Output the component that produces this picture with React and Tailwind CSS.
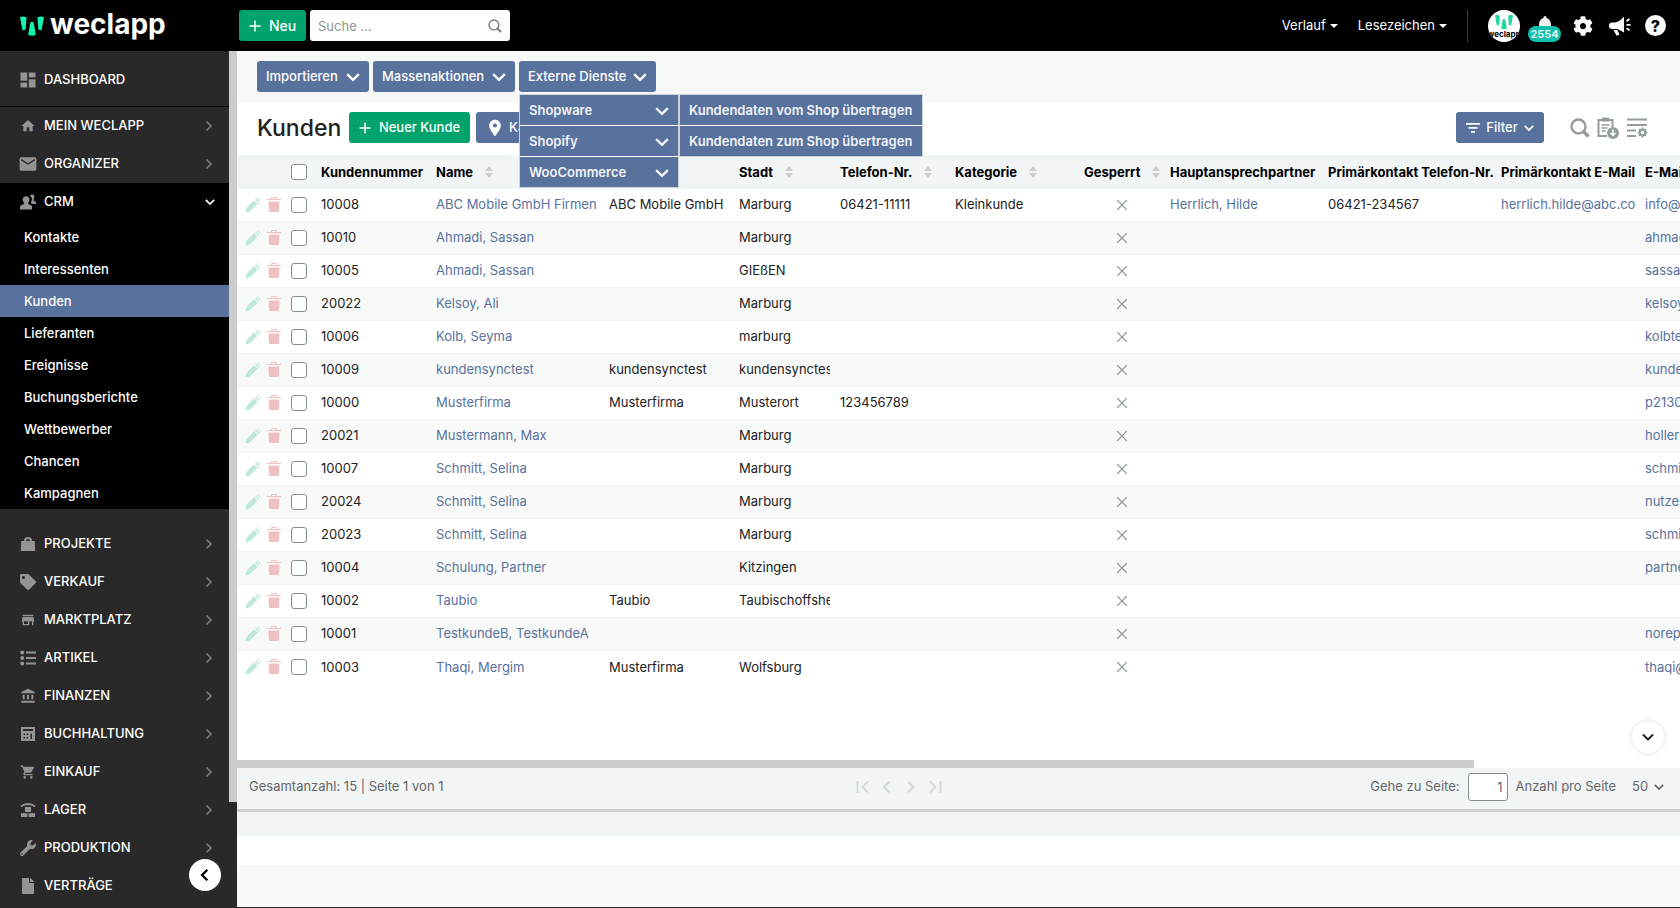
import React, { useState } from 'react';
import {
  MdDashboard,
  MdHome,
  MdEmail,
  MdStore,
  MdAccountBalance,
  MdShoppingCart,
  MdLocationOn,
} from 'react-icons/md';
import { FaTag, FaWrench, FaFile, FaCog } from 'react-icons/fa';

const PeopleIcon = ({ className }) => (
  <svg viewBox="0 0 16 15" fill="currentColor" className={className}>
    <path d="M10 1.5C10.500.3 11.300 0 12.200 0c1.600 0 2.400 1.200 2.200 2.800-.1 1-.6 1.700-.9 2.100v1.300l2.500 1.200v2h-4L10.800 8c.8-1 1.100-2.200 1.100-3.500 0-1.400-.8-2.500-1.900-3z" />
    <path d="M6.300 1.700c2.100 0 3.300 1.400 3.200 3.400-.1 1.400-.6 2.300-1.200 3v1.500l3 1.300c.6.300.8.8.8 1.500V15H0v-2.600c0-.7.300-1.200.9-1.500l3-1.300V8.100c-.6-.7-1.100-1.600-1.200-3-.1-2 1.400-3.400 3.600-3.400z" />
  </svg>
);

const BagIcon = ({ className }) => (
  <svg viewBox="0 0 16 16" fill="currentColor" className={className}>
    <path d="M1.200 5H4a4 4 0 0 1 8 0h2.800l.4 10H.8zM6 5h4a2 2 0 0 0-4 0z" fillRule="evenodd" />
  </svg>
);

const ListIcon = ({ className }) => (
  <svg viewBox="0 0 16 16" fill="currentColor" className={className}>
    <circle cx="2.200" cy="2.500" r="2" />
    <circle cx="2.200" cy="8" r="2" />
    <circle cx="2.200" cy="13.500" r="2" />
    <path d="M6 1.500h10v2H6zM6 7h10v2H6zM6 12.500h10v2H6z" />
  </svg>
);

const CalculatorIcon = ({ className }) => (
  <svg viewBox="0 0 16 16" fill="currentColor" className={className}>
    <path
      d="M1 1h14v14H1zM3 3v2h10V3zM3.500 7.500v1.500H5V7.500zM6.500 7.500v1.500H8V7.500zM3.500 11v1.500H5V11zM6.500 11v1.500H8V11zM10.500 7.500v5.500h1.500V7.500z"
      fillRule="evenodd"
    />
  </svg>
);

const WarehouseIcon = ({ className }) => (
  <svg viewBox="0 0 16 16" fill="currentColor" className={className}>
    <path d="M.4 3.600Q8-1.600 15.600 3.600l-.8 1.600Q8 .8 1.200 5.200zM5 5h6v5H5zM1 11.300h6.400V15H1zM8.600 11.300H15V15H8.600z" />
  </svg>
);

const BullhornIcon = ({ className }) => (
  <svg viewBox="0 0 22 20" fill="currentColor" className={className}>
    <path d="M15 .5v16L9.500 13.500 8.200 13H3.200A3.200 3.200 0 0 1 3 6.600h3Q11 5.500 15 .5zM4.500 14h3.800l2.200 4.500-2.900 1.200zM17 4.400l3-2.200 1 1.500-3 2.200zM17.500 8h4v1.800h-4zM17 12.900l.9-1.500 3.200 2-.9 1.500z" />
  </svg>
);

const Chevron = ({ className, dir = 'down', width = 2 }) => {
  const paths = { down: 'M1 3.500l5 5 5-5', right: 'M3.500 1.500L8 6l-4.500 4.500', left: 'M8 1.500L3.500 6 8 10.500' };
  return (
    <svg viewBox="0 0 12 12" fill="none" stroke="currentColor" strokeWidth={width} className={className}>
      <path d={paths[dir]} />
    </svg>
  );
};

const PlusIcon = () => (
  <svg viewBox="0 0 12 12" stroke="currentColor" strokeWidth="1.500" className="size-3">
    <path d="M6 .5v11M.5 6h11" />
  </svg>
);

const Caret = () => (
  <svg viewBox="0 0 8 4" fill="currentColor" className="h-1 w-2">
    <path d="M0 0h8L4 4z" />
  </svg>
);

const LogoMark = ({ className, fill = '#12f5b0' }) => (
  <svg viewBox="0 0 24 20" fill={fill} className={className}>
    <path d="M0 1.200Q3 0 6.500 1.200L5.600 13.500Q3.500 15 2.300 13.500zM17.500 1.200Q21 0 24 1.200L21.700 13.500Q20.500 15 18.400 13.500zM10.300 6.700Q12 5 13.700 6.700L15.800 18.800Q12 20.500 8.200 18.800z" />
  </svg>
);

const SearchIcon = ({ className, width = 2 }) => (
  <svg viewBox="0 0 20 20" fill="none" stroke="currentColor" strokeWidth={width} className={className}>
    <circle cx="8.500" cy="8.500" r="7" />
    <path d="M13.500 13.500L18.500 18.500" strokeWidth={width * 1.5} />
  </svg>
);

const SortIcon = () => (
  <svg viewBox="0 0 8 12" fill="#cbcfc8" className="ml-3 h-3 w-2 shrink-0">
    <path d="M4 0l4 5H0zM4 12L0 7h8z" />
  </svg>
);

const baseIcon = 'mr-2 size-4 shrink-0 text-[#949494]';
const wideIcon = '-ml-0.5 mr-1.5 size-5 shrink-0 text-[#949494]';

const mainMenu = [
  { label: 'MEIN WECLAPP', icon: MdHome },
  { label: 'ORGANIZER', icon: MdEmail, wide: true },
];

const crmMenu = [
  'Kontakte',
  'Interessenten',
  'Kunden',
  'Lieferanten',
  'Ereignisse',
  'Buchungsberichte',
  'Wettbewerber',
  'Chancen',
  'Kampagnen',
];

const moreMenu = [
  { label: 'PROJEKTE', icon: BagIcon },
  { label: 'VERKAUF', icon: FaTag },
  { label: 'MARKTPLATZ', icon: MdStore },
  { label: 'ARTIKEL', icon: ListIcon },
  { label: 'FINANZEN', icon: MdAccountBalance },
  { label: 'BUCHHALTUNG', icon: CalculatorIcon },
  { label: 'EINKAUF', icon: MdShoppingCart },
  { label: 'LAGER', icon: WarehouseIcon },
  { label: 'PRODUKTION', icon: FaWrench },
  { label: 'VERTRÄGE', icon: FaFile, noArrow: true },
];

const columns = [
  { label: 'Kundennummer', width: 'w-[115px]' },
  { label: 'Name', width: 'w-[173px]', sort: true },
  { label: '', width: 'w-[130px]' },
  { label: 'Stadt', width: 'w-[101px]', sort: true },
  { label: 'Telefon-Nr.', width: 'w-[115px]', sort: true },
  { label: 'Kategorie', width: 'w-[129px]', sort: true },
  { label: 'Gesperrt', width: 'w-[86px]', sort: true },
  { label: 'Hauptansprechpartner', width: 'w-[158px]' },
  { label: 'Primärkontakt Telefon-Nr.', width: 'w-[173px]' },
  { label: 'Primärkontakt E-Mail', width: 'w-[144px]' },
  { label: 'E-Mail', width: 'w-[160px]' },
];

const customers = [
  {
    nr: '10008',
    name: 'ABC Mobile GmbH Firmen',
    company: 'ABC Mobile GmbH',
    city: 'Marburg',
    phone: '06421-11111',
    category: 'Kleinkunde',
    contact: 'Herrlich, Hilde',
    contactPhone: '06421-234567',
    contactMail: 'herrlich.hilde@abc.com',
    mail: 'info@abc.com',
  },
  { nr: '10010', name: 'Ahmadi, Sassan', city: 'Marburg', mail: 'ahmadi@mail.de' },
  { nr: '10005', name: 'Ahmadi, Sassan', city: 'GIEßEN', mail: 'sassan@mail.de' },
  { nr: '20022', name: 'Kelsoy, Ali', city: 'Marburg', mail: 'kelsoy@mail.de' },
  { nr: '10006', name: 'Kolb, Seyma', city: 'marburg', mail: 'kolbtest@mail.de' },
  { nr: '10009', name: 'kundensynctest', company: 'kundensynctest', city: 'kundensynctest', mail: 'kunden@mail.de' },
  { nr: '10000', name: 'Musterfirma', company: 'Musterfirma', city: 'Musterort', phone: '123456789', mail: 'p2130@mail.de' },
  { nr: '20021', name: 'Mustermann, Max', city: 'Marburg', mail: 'holler@mail.de' },
  { nr: '10007', name: 'Schmitt, Selina', city: 'Marburg', mail: 'schmitt@mail.de' },
  { nr: '20024', name: 'Schmitt, Selina', city: 'Marburg', mail: 'nutzer@mail.de' },
  { nr: '20023', name: 'Schmitt, Selina', city: 'Marburg', mail: 'schmitt@mail.de' },
  { nr: '10004', name: 'Schulung, Partner', city: 'Kitzingen', mail: 'partner@mail.de' },
  { nr: '10002', name: 'Taubio', company: 'Taubio', city: 'Taubischoffsheim' },
  { nr: '10001', name: 'TestkundeB, TestkundeA', mail: 'noreply@mail.de' },
  { nr: '10003', name: 'Thaqi, Mergim', company: 'Musterfirma', city: 'Wolfsburg', mail: 'thaqi@mail.de' },
];

function MenuItem({ label, icon: Icon, wide, noArrow }) {
  return (
    <a href="#" className="flex h-[38px] items-center pr-3.5 pl-5 font-medium text-white">
      <Icon className={wide ? wideIcon : baseIcon} />
      <span className="flex-1">{label}</span>
      {!noArrow && <Chevron dir="right" className="size-3 text-[#7c7c7c]" width={1.7} />}
    </a>
  );
}

function Sidebar() {
  return (
    <aside className="relative flex w-[237px] shrink-0 bg-[#292929] text-[13px]">
      <nav className="flex-1">
        <a href="#" className="flex h-14 items-center border-b border-black pt-0.5 pl-5 font-medium text-white">
          <MdDashboard className={wideIcon} />
          DASHBOARD
        </a>
        {mainMenu.map(item => (
          <MenuItem key={item.label} {...item} />
        ))}
        <div className="mb-4 bg-black">
          <a href="#" className="flex h-[38px] items-center pr-3.5 pl-5 font-medium text-white">
            <PeopleIcon className={baseIcon} />
            <span className="flex-1">CRM</span>
            <Chevron className="size-2.5" />
          </a>
          {crmMenu.map(label => (
            <a
              key={label}
              href="#"
              className={`flex h-8 items-center pt-0.5 pl-6 font-medium text-white ${
                label === 'Kunden' ? 'bg-[#58719d]' : ''
              }`}
            >
              {label}
            </a>
          ))}
        </div>
        {moreMenu.map(item => (
          <MenuItem key={item.label} {...item} />
        ))}
      </nav>
      <div className="h-[751px] w-2 bg-[#cccccc]" />
      <button
        type="button"
        aria-label="Menü einklappen"
        className="absolute right-4 bottom-4 flex size-8 items-center justify-center rounded-full bg-white text-black"
      >
        <Chevron dir="left" className="size-3.5" />
      </button>
    </aside>
  );
}

function Header() {
  return (
    <header className="flex h-[51px] items-center bg-black text-[13px] text-white">
      <a href="#" className="flex w-[239px] items-center pl-5">
        <LogoMark className="mr-1.5 h-5 w-6" />
        <span className="pb-1 text-[28px] leading-8 font-bold">weclapp</span>
      </a>
      <button
        type="button"
        className="flex h-[31px] w-[67px] items-center justify-center gap-2 rounded-[3px] bg-[#00a36c] text-sm font-medium"
      >
        <PlusIcon />
        Neu
      </button>
      <div className="ml-1 flex h-[31px] w-[200px] items-center rounded-[3px] bg-white px-2">
        <input
          type="text"
          aria-label="Suche"
          placeholder="Suche ..."
          className="min-w-0 flex-1 pt-0.5 text-black outline-none placeholder:text-[#8c9693]"
        />
        <SearchIcon className="size-3.5 text-[#7a7f7e]" />
      </div>
      <div className="ml-auto flex items-center">
        <button type="button" className="flex items-center gap-1">
          Verlauf <Caret />
        </button>
        <button type="button" className="ml-5 flex items-center gap-1">
          Lesezeichen <Caret />
        </button>
        <div className="mx-5 h-8 w-px bg-[#3c3c3c]" />
        <button
          type="button"
          className="flex size-8 flex-col items-center overflow-hidden rounded-full bg-white pt-1 text-black"
        >
          <LogoMark className="h-4 w-[18px] shrink-0" fill="#1fd6a0" />
          <span className="text-[8px] leading-2 font-bold">weclapp</span>
        </button>
        <button type="button" aria-label="Benachrichtigungen" className="relative mx-2 flex h-8 w-[33px] justify-center">
          <svg viewBox="0 0 12 14" fill="#efefef" className="mt-1.5 h-3.5 w-3">
            <path d="M6 0a1.500 1.500 0 0 1 1.400 1.900C10.500 2.600 12 5.500 12 9v5H0V9C0 5.500 1.500 2.600 4.600 1.900A1.500 1.500 0 0 1 6 0z" />
          </svg>
          <span className="absolute inset-x-0 bottom-0 rounded-full bg-[#12bfae] text-center text-[11px] leading-4 font-semibold text-[#e8faf8]">
            2554
          </span>
        </button>
        <button type="button" aria-label="Einstellungen" className="ml-1">
          <FaCog className="size-5" />
        </button>
        <button type="button" aria-label="Neuigkeiten" className="ml-4">
          <BullhornIcon className="h-5 w-[22px]" />
        </button>
        <button
          type="button"
          className="mr-3.5 ml-3.5 size-[21px] rounded-full bg-white text-center text-base leading-5 font-extrabold text-black"
        >
          ?
        </button>
      </div>
    </header>
  );
}

const actionButton =
  'flex h-[31px] items-center rounded-[3px] bg-[#58719d] px-[9px] text-[13px] font-medium text-white whitespace-nowrap';
const menuButton =
  'flex h-[30px] w-full items-center justify-between bg-[#58719d] px-[9px] pt-0.5 text-[13px] font-semibold text-[#f1f4f8] whitespace-nowrap';

function ServicesMenu() {
  return (
    <div className="absolute top-[33px] left-0 z-10 flex items-start">
      <div className="flex w-[160px] flex-col gap-px border border-[#cfd3d8] bg-white">
        {['Shopware', 'Shopify', 'WooCommerce'].map(label => (
          <button key={label} type="button" className={menuButton}>
            {label}
            <Chevron className="size-3.5" />
          </button>
        ))}
      </div>
      <div className="flex w-[244px] flex-col gap-px border border-[#cfd3d8] bg-white">
        <button type="button" className={menuButton}>
          Kundendaten vom Shop übertragen
        </button>
        <button type="button" className={menuButton}>
          Kundendaten zum Shop übertragen
        </button>
      </div>
    </div>
  );
}

function Toolbar() {
  return (
    <>
      <div className="flex h-[51px] items-center gap-1 bg-[#f7f9f9] px-5">
        <button type="button" className={`${actionButton} w-28 justify-between`}>
          Importieren <Chevron className="size-3.5" />
        </button>
        <button type="button" className={`${actionButton} w-[142px] justify-between`}>
          Massenaktionen <Chevron className="size-3.5" />
        </button>
        <div className="relative">
          <button type="button" className={`${actionButton} w-[137px] justify-between`}>
            Externe Dienste <Chevron className="size-3.5" />
          </button>
          <ServicesMenu />
        </div>
      </div>
      <div className="flex h-[53px] items-center px-5 pb-0.5">
        <h1 className="w-[92px] pt-0.5 text-[23px] font-medium text-[#222222]">Kunden</h1>
        <button
          type="button"
          className="flex h-[31px] w-[121px] items-center justify-center gap-2 rounded-[3px] bg-[#00a36c] text-[13px] font-medium whitespace-nowrap text-white"
        >
          <PlusIcon />
          Neuer Kunde
        </button>
        <button type="button" className={`${actionButton} ml-1.5 gap-1`}>
          <MdLocationOn className="size-5" />
          Karte
        </button>
        <button type="button" className={`${actionButton} ml-auto w-[88px] justify-center gap-1.5`}>
          <svg viewBox="0 0 14 10" fill="currentColor" className="h-2.5 w-3.5">
            <path d="M0 0h14v1.800H0zM2.500 4h9v1.800h-9zM5 8h4v1.800H5z" />
          </svg>
          Filter
          <Chevron className="size-2.5" />
        </button>
        <div className="ml-[26px] flex items-center gap-[7px] pr-3 text-[#939e9b]">
          <button type="button" aria-label="Suchen">
            <SearchIcon className="size-5" width={2.4} />
          </button>
          <button type="button" aria-label="Exportieren">
            <svg viewBox="0 0 22 22" fill="none" stroke="currentColor" strokeWidth="2" className="size-[22px]">
              <path d="M10 19H1.500V3h14v7" />
              <path d="M5 2.500h7" strokeWidth="4" />
              <path d="M4.500 8h8M4.500 11h6M4.500 14h4" strokeWidth="1.500" />
              <circle cx="16" cy="16" r="6" fill="currentColor" stroke="none" />
              <path d="M16 12.500V18M13.500 16l2.500 2.500 2.500-2.500" stroke="#fff" strokeWidth="1.500" />
            </svg>
          </button>
          <button type="button" aria-label="Spalten">
            <svg viewBox="0 0 22 20" fill="none" stroke="currentColor" strokeWidth="2" className="h-5 w-[22px]">
              <path d="M1 1.500h20M1 7h20M1 12.500h9M1 18h9" />
              <circle cx="16.500" cy="14.500" r="2.800" />
              <path d="M16.500 9.500v2M16.500 17.500v2M11.800 14.500h2M19.200 14.500h2M13.100 11.100l1.400 1.400M18.500 16.500l1.400 1.400M19.900 11.100l-1.400 1.400M14.500 16.500l-1.400 1.400" />
            </svg>
          </button>
        </div>
      </div>
    </>
  );
}

const checkboxClass = 'block size-4 appearance-none rounded-[3px] border border-[#84908e] bg-white checked:bg-[#58719d]';
const cell = 'overflow-hidden pt-px pl-[5px]';

function Clip({ children, link }) {
  if (!children) return null;
  if (link) {
    return (
      <a href="#" className="mr-[5px] block overflow-hidden whitespace-nowrap text-[#58719d]">
        {children}
      </a>
    );
  }
  return <span className="mr-[5px] block overflow-hidden whitespace-nowrap">{children}</span>;
}

function CustomerTable() {
  return (
    <div className="relative overflow-hidden bg-white">
      <table className="w-[1563px] table-fixed text-left text-[13px] text-[#222222]">
        <thead>
          <tr className="h-[33px] bg-[#f1f5f6] text-black">
            <th className="w-[79px] pt-0.5 pl-[54px]">
              <input type="checkbox" aria-label="Alle auswählen" className={checkboxClass} />
            </th>
            {columns.map(col => (
              <th key={col.label} className={`${col.width} pt-0.5 pl-[5px] font-bold whitespace-nowrap`}>
                <span className="flex items-center">
                  {col.label}
                  {col.sort && <SortIcon />}
                </span>
              </th>
            ))}
          </tr>
        </thead>
        <tbody>
          {customers.map(c => (
            <tr key={c.nr} className="h-[33px] border-t border-[#f3f5f5] bg-white even:bg-[#f8faf9]">
              <td>
                <div className="flex items-center pl-2">
                  <button type="button" aria-label="Bearbeiten" className="text-[#bfe8d9]">
                    <svg viewBox="0 0 16 16" fill="currentColor" className="size-4">
                      <path d="M.5 15.500Q.5 12 2 10.200L9.200 3.300 12.700 6.800 5.500 13.800Q3.500 15.500.5 15.500zM10.100 2.400l1.200-1.100 3.500 3.500-1.200 1.100zM12.100.6Q12.700 0 13.400.6l2.200 2.200q.6.700 0 1.300z" />
                    </svg>
                  </button>
                  <button type="button" aria-label="Löschen" className="ml-1.5 text-[#efc0c0]">
                    <svg viewBox="0 0 14 15" fill="currentColor" className="h-[15px] w-3.5">
                      <path d="M0 2h4V.9Q4 0 5 0h4q1 0 1 .9V2h4v1H0zM5 1v1h4V1zM1.500 4.500h11L12 14q0 1-1 1H3q-1 0-1-1z" fillRule="evenodd" />
                    </svg>
                  </button>
                  <input type="checkbox" aria-label={`Kunde ${c.nr} auswählen`} className={`${checkboxClass} ml-2.5`} />
                </div>
              </td>
              <td className={cell}><Clip>{c.nr}</Clip></td>
              <td className={cell}><Clip link>{c.name}</Clip></td>
              <td className={cell}><Clip>{c.company}</Clip></td>
              <td className={cell}><Clip>{c.city}</Clip></td>
              <td className={cell}><Clip>{c.phone}</Clip></td>
              <td className={cell}><Clip>{c.category}</Clip></td>
              <td>
                <svg viewBox="0 0 10 10" stroke="#84908e" strokeWidth="1.200" className="mx-auto size-2.5">
                  <path d="M0 0l10 10M10 0L0 10" />
                </svg>
              </td>
              <td className={cell}><Clip link>{c.contact}</Clip></td>
              <td className={cell}><Clip>{c.contactPhone}</Clip></td>
              <td className={cell}><Clip link>{c.contactMail}</Clip></td>
              <td className={cell}><Clip link>{c.mail}</Clip></td>
            </tr>
          ))}
        </tbody>
      </table>
      <div className="mt-[77px] h-2 w-6/7 bg-[#cccccc]" />
      <button
        type="button"
        aria-label="Nach unten"
        className="absolute right-4 bottom-[15px] flex size-8 items-center justify-center rounded-full bg-white text-[#222222] shadow-[0_0_6px_rgba(0,0,0,0.12)]"
      >
        <Chevron className="size-3" />
      </button>
    </div>
  );
}

function Pagination() {
  const [page, setPage] = useState('1');
  const [perPage, setPerPage] = useState('50');

  return (
    <div className="flex h-11 items-center justify-between border-b-[3px] border-[#cdd1d1] bg-[#f1f5f6] px-3 pb-1 text-[13px] text-[#666666]">
      <span>Gesamtanzahl: 15 | Seite 1 von 1</span>
      <div className="flex gap-2.5 pr-4 text-[#d3d7d7]">
        <button type="button" aria-label="Erste Seite" className="flex">
          <svg viewBox="0 0 14 14" fill="none" stroke="currentColor" strokeWidth="1.800" className="size-3.5">
            <path d="M1.500 1v12M12 1.500L6.500 7l5.500 5.500" />
          </svg>
        </button>
        <button type="button" aria-label="Vorherige Seite">
          <Chevron dir="left" className="size-3.5" />
        </button>
        <button type="button" aria-label="Nächste Seite">
          <Chevron dir="right" className="size-3.5" />
        </button>
        <button type="button" aria-label="Letzte Seite" className="flex">
          <svg viewBox="0 0 14 14" fill="none" stroke="currentColor" strokeWidth="1.800" className="size-3.5">
            <path d="M12.500 1v12M2 1.500L7.500 7 2 12.500" />
          </svg>
        </button>
      </div>
      <div className="flex items-center">
        <label htmlFor="page">Gehe zu Seite:</label>
        <input
          id="page"
          type="text"
          value={page}
          onChange={e => setPage(e.target.value)}
          className="mx-2 h-7 w-10 rounded-[3px] border border-[#84908e] bg-white px-1 text-right"
        />
        <label htmlFor="perPage">Anzahl pro Seite</label>
        <div className="relative ml-4 flex items-center">
          <select
            id="perPage"
            value={perPage}
            onChange={e => setPerPage(e.target.value)}
            className="w-9 appearance-none"
          >
            <option>25</option>
            <option>50</option>
            <option>100</option>
          </select>
          <Chevron className="pointer-events-none absolute right-1 size-2.5" />
        </div>
      </div>
    </div>
  );
}

function App() {
  return (
    <div className="flex min-h-screen flex-col border-b border-[#2b2523] bg-white font-['Inter','Liberation_Sans',sans-serif]">
      <Header />
      <div className="flex flex-1">
        <Sidebar />
        <main className="flex min-w-0 flex-1 flex-col">
          <Toolbar />
          <CustomerTable />
          <Pagination />
          <div className="h-6 bg-[#f1f5f6]" />
          <div className="h-[29px] bg-white" />
          <div className="flex-1 bg-[#f8faf9]" />
        </main>
      </div>
    </div>
  );
}

export default App;
